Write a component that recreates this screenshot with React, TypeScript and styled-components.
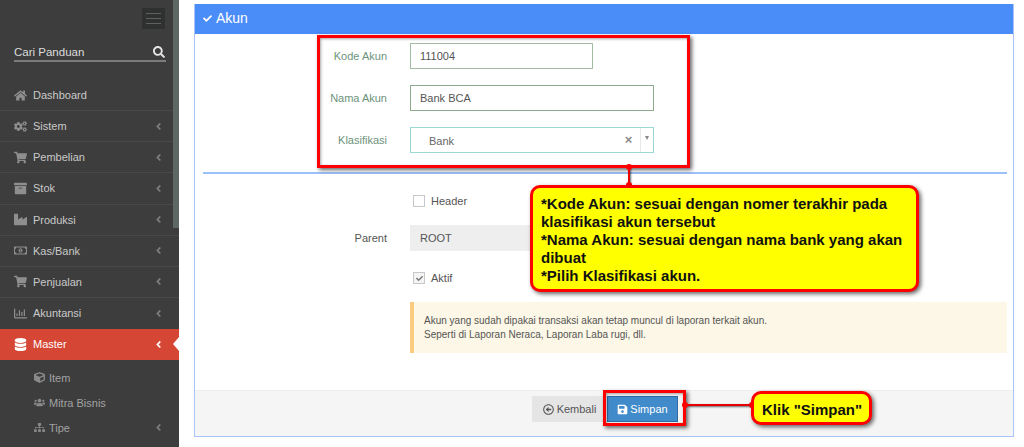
import { ReactNode } from 'react'
import styled, { createGlobalStyle } from 'styled-components'
import {
  FaAngleLeft,
  FaArchive,
  FaCheck,
  FaCogs,
  FaCube,
  FaDatabase,
  FaHome,
  FaIndustry,
  FaRegArrowAltCircleLeft,
  FaRegChartBar,
  FaRegMoneyBillAlt,
  FaSave,
  FaSearch,
  FaShoppingCart,
  FaSitemap,
  FaUsers,
} from 'react-icons/fa'

const GlobalStyle = createGlobalStyle`
  html, body {
    margin: 0;
    background: #fff;
    overflow: hidden;
  }
  * {
    box-sizing: border-box;
  }
  body {
    font-family: "Liberation Sans", Arial, sans-serif;
  }
`

const Page = styled.div`
  display: flex;
  position: relative;
  width: 1024px;
  height: 447px;
  overflow: hidden;
`

const Sidebar = styled.aside`
  position: relative;
  flex: 0 0 179px;
  height: 447px;
  background: #3d3d3d;
  overflow: hidden;
`

const Scrollbar = styled.div`
  position: absolute;
  right: 0;
  top: 0;
  width: 6px;
  height: 228px;
  background: #5f6666;
`

const TopBar = styled.div`
  display: flex;
  justify-content: flex-end;
  padding: 8px 14px 0 0;
`

const Toggler = styled.div`
  display: flex;
  flex-direction: column;
  justify-content: center;
  gap: 4px;
  width: 23px;
  height: 21px;
  padding: 0 4px;
  background: #2f3130;
`

const TogglerLine = styled.span`
  height: 1px;
  background: #5e6160;
`

const Search = styled.div`
  display: flex;
  align-items: flex-end;
  justify-content: space-between;
  width: 152px;
  height: 18px;
  margin: 15px 0 0 14px;
  border-bottom: 2px solid #7c7c7c;
  color: #dcdcdc;
  font-size: 11.5px;
  padding: 0 1px 2px 0;
  svg {
    font-size: 12px;
    color: #e4e4e4;
  }
`

const Menu = styled.ul`
  list-style: none;
  margin: 18px 0 0;
  padding: 0;
`

const MenuItem = styled.li<{ $active?: boolean; $plain?: boolean }>`
  position: relative;
  display: flex;
  align-items: center;
  height: ${({ $active }) => ($active ? '31px' : '31.15px')};
  padding: 0 15px 0 13px;
  font-size: 11px;
  color: ${({ $active }) => ($active ? '#fff' : '#c9c9c9')};
  background: ${({ $active }) => ($active ? '#d64635' : 'transparent')};
  border-bottom: 1px solid ${({ $active, $plain }) => ($active || $plain ? 'transparent' : '#484848')};
`

const MenuIcon = styled.span<{ $active?: boolean }>`
  display: flex;
  justify-content: center;
  width: 14px;
  margin-right: 6px;
  font-size: 13px;
  color: ${({ $active }) => ($active ? '#fff' : '#8e8e8e')};
`

const MenuLabel = styled.span`
  flex: 1;
`

const Chevron = styled(FaAngleLeft)<{ $active?: boolean }>`
  font-size: 11px;
  color: ${({ $active }) => ($active ? '#fff' : '#7d7d7d')};
`

const ActiveNotch = styled.span`
  position: absolute;
  right: 0;
  top: 8px;
  width: 0;
  height: 0;
  border-top: 7px solid transparent;
  border-bottom: 7px solid transparent;
  border-right: 6px solid #fff;
`

const SubMenu = styled.ul`
  list-style: none;
  margin: 5px 0 0;
  padding: 0;
`

const SubItem = styled.li`
  display: flex;
  align-items: center;
  height: 25px;
  padding: 0 15px 0 34px;
  font-size: 11px;
  color: #a2a2a2;
`

const SubIcon = styled.span`
  display: flex;
  justify-content: center;
  width: 11px;
  margin-right: 4px;
  font-size: 11px;
  color: #8a8a8a;
`

const Main = styled.main`
  flex: 1;
  padding: 4px 10px 0 15px;
`

const Panel = styled.section`
  display: flex;
  flex-direction: column;
  height: 433px;
  border: 1px solid #a8c6fa;
  border-top: 0;
`

const PanelHeader = styled.header`
  display: flex;
  align-items: center;
  gap: 4px;
  height: 30px;
  padding: 0 0 2px 8px;
  background: #4b8df8;
  color: #fff;
  font-size: 14px;
  svg {
    font-size: 9px;
  }
`

const PanelBody = styled.div`
  flex: 1;
  padding-top: 9px;
`

const Row = styled.div`
  display: flex;
  align-items: center;
  height: 25px;
  margin-bottom: 17px;
`

const Label = styled.label<{ $muted?: boolean }>`
  flex: 0 0 192px;
  text-align: right;
  font-size: 11px;
  color: ${({ $muted }) => ($muted ? '#555' : '#6d927c')};
`

const Control = styled.div`
  margin-left: 23px;
  position: relative;
`

const Input = styled.div<{ $width: number; $border: string }>`
  display: flex;
  align-items: center;
  width: ${({ $width }) => $width}px;
  height: 26px;
  padding-left: 9px;
  border: 1px solid ${({ $border }) => $border};
  font-size: 11px;
  color: #555;
  background: #fff;
`

const SelectBox = styled.div`
  display: flex;
  align-items: center;
  width: 244px;
  height: 26px;
  border: 1px solid #9ad8d4;
  font-size: 11px;
  color: #666;
`

const SelectText = styled.span`
  flex: 1;
  padding: 3px 0 0 18px;
`

const ClearMark = styled.span`
  width: 18px;
  padding-right: 5px;
  text-align: center;
  font-size: 13px;
  font-weight: bold;
  color: #8a8a8a;
`

const Caret = styled.span`
  display: flex;
  justify-content: center;
  padding-top: 8px;
  align-self: stretch;
  width: 13px;
  border-left: 1px solid #e8e8e8;
  &::before {
    content: '';
    width: 0;
    height: 0;
    border-left: 2.5px solid transparent;
    border-right: 2.5px solid transparent;
    border-top: 4px solid #888;
  }
`

const Divider = styled.hr`
  margin: 20px 6px 0 8px;
  border: 0;
  border-top: 2px solid #9cc0f8;
`

const CheckRow = styled.div`
  display: flex;
  align-items: center;
  gap: 6px;
  height: 14px;
  margin-left: 218px;
  font-size: 11px;
  color: #555;
`

const HeaderCheck = styled(CheckRow)`
  margin-top: 20px;
`

const ActiveCheck = styled(CheckRow)`
  margin-top: 21px;
`

const CheckBox = styled.span<{ $checked?: boolean }>`
  display: flex;
  align-items: center;
  justify-content: center;
  width: 12px;
  height: 12px;
  border: 1px solid #c8c8c8;
  background: ${({ $checked }) => ($checked ? '#f4f4f4' : '#fff')};
  color: #777;
  font-size: 7px;
`

const ParentRow = styled(Row)`
  margin: 17px 0 0;
`

const ParentInput = styled(Input)`
  background: #eeeeee;
  border-color: #eeeeee;
`

const Notice = styled.div`
  margin: 17px 6px 0 215px;
  height: 51px;
  padding: 12px 0 0 10px;
  border-left: 4px solid #fbcb7f;
  background: #fcf7e6;
  font-size: 10px;
  line-height: 14px;
  color: #555;
`

const PanelFooter = styled.footer`
  display: flex;
  justify-content: flex-start;
  gap: 4px;
  height: 46px;
  padding: 5px 0 0 337px;
  background: #f5f5f5;
  border-top: 1px solid #eee;
`

const Button = styled.button<{ $primary?: boolean }>`
  display: flex;
  align-items: center;
  justify-content: center;
  gap: ${({ $primary }) => ($primary ? '2px' : '3px')};
  height: 26px;
  width: 71px;
  border: ${({ $primary }) => ($primary ? '1px solid #2e6da4' : '0')};
  background: ${({ $primary }) => ($primary ? '#428bca' : '#e5e5e5')};
  color: ${({ $primary }) => ($primary ? '#fff' : '#555')};
  font-family: inherit;
  font-size: 11px;
  padding: ${({ $primary }) => ($primary ? '0' : '0 0 0 4px')};
  svg {
    font-size: 11px;
  }
`

const Highlight = styled.div<{ $left: number; $top: number; $width: number; $height: number }>`
  position: absolute;
  left: ${({ $left }) => $left}px;
  top: ${({ $top }) => $top}px;
  width: ${({ $width }) => $width}px;
  height: ${({ $height }) => $height}px;
  border: 3px solid #f00;
  box-shadow: 2px 2px 4px rgba(0, 0, 0, 0.6), inset 1px 1px 3px rgba(0, 0, 0, 0.35);
`

const Callout = styled.div<{ $left: number; $top: number; $width: number; $height: number }>`
  position: absolute;
  left: ${({ $left }) => $left}px;
  top: ${({ $top }) => $top}px;
  width: ${({ $width }) => $width}px;
  height: ${({ $height }) => $height}px;
  padding: 7px 0 0 8px;
  border: 3px solid #f00;
  border-radius: 10px;
  background: #ff0;
  box-shadow: 2px 2px 4px rgba(0, 0, 0, 0.6);
  font-size: 15px;
  font-weight: bold;
  line-height: 18px;
  color: #111;
`

const Connector = styled.div<{ $left: number; $top: number; $width: number; $height: number }>`
  position: absolute;
  left: ${({ $left }) => $left}px;
  top: ${({ $top }) => $top}px;
  width: ${({ $width }) => $width}px;
  height: ${({ $height }) => $height}px;
  background: #e60000;
  box-shadow: 1px 1px 2px rgba(0, 0, 0, 0.6);
`

const Dot = styled.span<{ $left: number; $top: number }>`
  position: absolute;
  left: ${({ $left }) => $left}px;
  top: ${({ $top }) => $top}px;
  width: 6px;
  height: 6px;
  border-radius: 50%;
  background: #f00;
`

type NavEntry = { label: string; icon: ReactNode; arrow?: boolean }

const navEntries: NavEntry[] = [
  { label: 'Dashboard', icon: <FaHome /> },
  { label: 'Sistem', icon: <FaCogs />, arrow: true },
  { label: 'Pembelian', icon: <FaShoppingCart />, arrow: true },
  { label: 'Stok', icon: <FaArchive />, arrow: true },
  { label: 'Produksi', icon: <FaIndustry />, arrow: true },
  { label: 'Kas/Bank', icon: <FaRegMoneyBillAlt />, arrow: true },
  { label: 'Penjualan', icon: <FaShoppingCart />, arrow: true },
  { label: 'Akuntansi', icon: <FaRegChartBar />, arrow: true },
]

const App = () => (
  <Page>
    <GlobalStyle />
    <Sidebar>
      <TopBar>
        <Toggler>
          <TogglerLine />
          <TogglerLine />
          <TogglerLine />
        </Toggler>
      </TopBar>
      <Search>
        Cari Panduan
        <FaSearch />
      </Search>
      <Menu>
        {navEntries.map((entry) => (
          <MenuItem key={entry.label} $plain={entry.label === 'Akuntansi'}>
            <MenuIcon>{entry.icon}</MenuIcon>
            <MenuLabel>{entry.label}</MenuLabel>
            {entry.arrow && <Chevron />}
          </MenuItem>
        ))}
        <MenuItem $active>
          <MenuIcon $active>
            <FaDatabase />
          </MenuIcon>
          <MenuLabel>Master</MenuLabel>
          <Chevron $active />
          <ActiveNotch />
        </MenuItem>
      </Menu>
      <SubMenu>
        <SubItem>
          <SubIcon>
            <FaCube />
          </SubIcon>
          <MenuLabel>Item</MenuLabel>
        </SubItem>
        <SubItem>
          <SubIcon>
            <FaUsers />
          </SubIcon>
          <MenuLabel>Mitra Bisnis</MenuLabel>
        </SubItem>
        <SubItem>
          <SubIcon>
            <FaSitemap />
          </SubIcon>
          <MenuLabel>Tipe</MenuLabel>
          <Chevron />
        </SubItem>
      </SubMenu>
      <Scrollbar />
    </Sidebar>
    <Main>
      <Panel>
        <PanelHeader>
          <FaCheck />
          Akun
        </PanelHeader>
        <PanelBody>
          <Row>
            <Label>Kode Akun</Label>
            <Control>
              <Input $width={183} $border="#a3bda3">
                111004
              </Input>
            </Control>
          </Row>
          <Row>
            <Label>Nama Akun</Label>
            <Control>
              <Input $width={244} $border="#8fa98f">
                Bank BCA
              </Input>
            </Control>
          </Row>
          <Row>
            <Label>Klasifikasi</Label>
            <Control>
              <SelectBox>
                <SelectText>Bank</SelectText>
                <ClearMark>×</ClearMark>
                <Caret />
              </SelectBox>
            </Control>
          </Row>
          <Divider />
          <HeaderCheck>
            <CheckBox />
            Header
          </HeaderCheck>
          <ParentRow>
            <Label $muted>Parent</Label>
            <Control>
              <ParentInput $width={244} $border="#eeeeee">
                ROOT
              </ParentInput>
            </Control>
          </ParentRow>
          <ActiveCheck>
            <CheckBox $checked>
              <FaCheck />
            </CheckBox>
            Aktif
          </ActiveCheck>
          <Notice>
            Akun yang sudah dipakai transaksi akan tetap muncul di laporan terkait akun.
            <br />
            Seperti di Laporan Neraca, Laporan Laba rugi, dll.
          </Notice>
        </PanelBody>
        <PanelFooter>
          <Button>
            <FaRegArrowAltCircleLeft />
            Kembali
          </Button>
          <Button $primary>
            <FaSave />
            Simpan
          </Button>
        </PanelFooter>
      </Panel>
    </Main>

    <Highlight $left={317} $top={35} $width={373} $height={133} />
    <Connector $left={628} $top={167} $width={2} $height={20} />
    <Dot $left={626} $top={164} />
    <Dot $left={626} $top={182} />
    <Callout $left={530} $top={185} $width={389} $height={107}>
      *Kode Akun: sesuai dengan nomer terakhir pada
      <br />
      klasifikasi akun tersebut
      <br />
      *Nama Akun: sesuai dengan nama bank yang akan
      <br />
      dibuat
      <br />
      *Pilih Klasifikasi akun.
    </Callout>

    <Highlight $left={603} $top={390} $width={83} $height={36} />
    <Connector $left={686} $top={404} $width={66} $height={2} />
    <Dot $left={682} $top={402} />
    <Dot $left={749} $top={402} />
    <Callout $left={751} $top={391} $width={121} $height={34}>
      Klik "Simpan"
    </Callout>
  </Page>
)

export default App
